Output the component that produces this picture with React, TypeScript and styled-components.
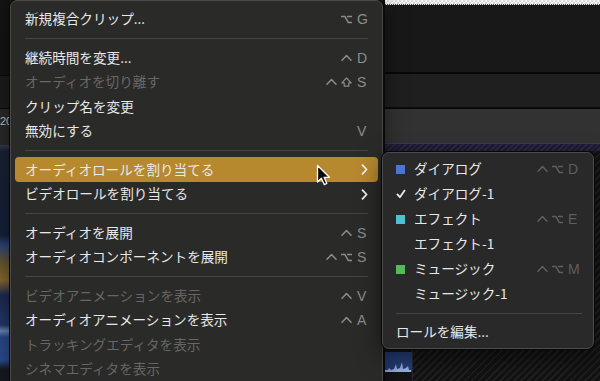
import React from 'react';
import styled, { createGlobalStyle } from 'styled-components';

type Mod = 'ctrl' | 'opt' | 'shift';

type MenuEntry =
  | { kind: 'sep' }
  | {
      kind: 'item';
      label: string;
      mods?: Mod[];
      keyName?: string;
      disabled?: boolean;
      submenu?: boolean;
      active?: boolean;
    };

type RoleEntry =
  | { kind: 'sep' }
  | {
      kind: 'role';
      label: string;
      swatch?: string;
      checked?: boolean;
      mods?: Mod[];
      keyName?: string;
      plain?: boolean;
    };

const mainItems: MenuEntry[] = [
  { kind: 'item', label: '新規複合クリップ...', mods: ['opt'], keyName: 'G' },
  { kind: 'sep' },
  { kind: 'item', label: '継続時間を変更...', mods: ['ctrl'], keyName: 'D' },
  { kind: 'item', label: 'オーディオを切り離す', mods: ['ctrl', 'shift'], keyName: 'S', disabled: true },
  { kind: 'item', label: 'クリップ名を変更' },
  { kind: 'item', label: '無効にする', keyName: 'V' },
  { kind: 'sep' },
  { kind: 'item', label: 'オーディオロールを割り当てる', submenu: true, active: true },
  { kind: 'item', label: 'ビデオロールを割り当てる', submenu: true },
  { kind: 'sep' },
  { kind: 'item', label: 'オーディオを展開', mods: ['ctrl'], keyName: 'S' },
  { kind: 'item', label: 'オーディオコンポーネントを展開', mods: ['ctrl', 'opt'], keyName: 'S' },
  { kind: 'sep' },
  { kind: 'item', label: 'ビデオアニメーションを表示', mods: ['ctrl'], keyName: 'V', disabled: true },
  { kind: 'item', label: 'オーディオアニメーションを表示', mods: ['ctrl'], keyName: 'A' },
  { kind: 'item', label: 'トラッキングエディタを表示', disabled: true },
  { kind: 'item', label: 'シネマエディタを表示', disabled: true }
];

const roleItems: RoleEntry[] = [
  { kind: 'role', label: 'ダイアログ', swatch: '#4d74d2', mods: ['ctrl', 'opt'], keyName: 'D' },
  { kind: 'role', label: 'ダイアログ-1', checked: true },
  { kind: 'role', label: 'エフェクト', swatch: '#4fc0cf', mods: ['ctrl', 'opt'], keyName: 'E' },
  { kind: 'role', label: 'エフェクト-1' },
  { kind: 'role', label: 'ミュージック', swatch: '#55b95c', mods: ['ctrl', 'opt'], keyName: 'M' },
  { kind: 'role', label: 'ミュージック-1' },
  { kind: 'sep' },
  { kind: 'role', label: 'ロールを編集...', plain: true }
];

const GlobalStyle = createGlobalStyle`
  html, body {
    margin: 0;
    padding: 0;
    background: #111;
  }
  body {
    font-family: "Noto Sans CJK JP", "Noto Sans", sans-serif;
  }
`;

const Stage = styled.div`
  position: relative;
  width: 600px;
  height: 381px;
  overflow: hidden;
  background: #161616;
`;

/* ---- the editor behind the menus ---- */

const Backdrop = styled.div`
  display: grid;
  grid-template-columns: 10px 373px 1fr;
  height: 100%;
`;

const LeftStrip = styled.div`
  display: flex;
  flex-direction: column;
  overflow: hidden;
`;

const Band = styled.div<{ $h: number; $bg: string }>`
  flex: 0 0 ${(p) => p.$h}px;
  background: ${(p) => p.$bg};
`;

const StripLabel = styled.div`
  flex: 0 0 36px;
  background: #2a2a2a;
  color: #c8c8c8;
  font-family: "Liberation Sans", sans-serif;
  font-size: 11px;
  line-height: 1;
  padding-top: 7px;
  box-sizing: border-box;
  white-space: nowrap;
  overflow: hidden;
`;

const ThumbStack = styled.div`
  flex: 1;
  background: linear-gradient(
    180deg,
    #3a3f4c 0px,
    #1a2236 6px,
    #15203a 90px,
    #2c4578 100px,
    #705a2c 120px,
    #8a6a30 135px,
    #1c2b52 150px,
    #233a6c 180px,
    #6f86b8 186px,
    #2a4a8c 192px,
    #2d4e92 215px,
    #161a24 224px
  );
`;

const CenterFill = styled.div`
  background: #1a1a1a;
`;

const RightPanels = styled.div`
  display: flex;
  flex-direction: column;
  border-left: 2px solid #0c0c0c;
  overflow: hidden;
`;

const Checker = styled.div`
  flex: 0 0 4px;
  background: repeating-conic-gradient(#d8d8d8 0 25%, #f4f4f4 0 50%) 0 0 / 4px 4px;
  border-bottom: 1px dotted #444;
`;

const RoleLane = styled.div`
  flex: 0 0 7px;
  border-top: 1px solid #3b3763;
  background: repeating-linear-gradient(135deg, #1d1b30 0 2px, #2a2744 2px 4px);
`;

const TimelineRow = styled.div`
  flex: 1;
  display: flex;
`;

const ClipColumn = styled.div`
  flex: 0 0 27px;
  display: flex;
  flex-direction: column;
  justify-content: flex-end;
  padding-bottom: 9px;
  background: #141414;
  border-right: 1px solid #2a2a2a;
`;

const WaveThumb = styled.div`
  height: 20px;
  background: #263f7c;
  display: flex;
  align-items: flex-end;
`;

const HatchFill = styled.div`
  flex: 1;
  background: repeating-linear-gradient(135deg, #121212 0 3px, #1f1f1f 3px 5px);
`;

/* ---- menus ---- */

const MenuPanel = styled.div`
  position: absolute;
  left: 10px;
  top: 0;
  width: 373px;
  height: 400px;
  box-sizing: border-box;
  padding: 5.75px 4px 0;
  background: #2a2a28;
  border: 1px solid #4a4946;
  border-radius: 7px;
  box-shadow: 0 0 0 1px #080808, 0 8px 24px rgba(0, 0, 0, 0.5);
  display: flex;
  flex-direction: column;
`;

const MenuRow = styled.div<{ $active?: boolean; $disabled?: boolean }>`
  flex: 0 0 24.5px;
  display: flex;
  align-items: center;
  padding: 0 9px 0 10px;
  border-radius: 4px;
  background: ${(p) => (p.$active ? '#b7892f' : 'transparent')};
  color: ${(p) => (p.$disabled ? '#686765' : '#e8e8e8')};
  font-size: 13.6px;
  line-height: 1;
  white-space: nowrap;
`;

const RowLabel = styled.span`
  flex: 1;
`;

const Shortcut = styled.span<{ $dim?: boolean }>`
  display: flex;
  align-items: center;
  gap: 5px;
  color: ${(p) => (p.$dim ? '#5f5f5d' : '#8c8c8a')};
`;

const Mods = styled.span`
  display: flex;
  align-items: center;
  gap: 4px;
`;

const ModIcon = styled.svg`
  width: 11px;
  height: 10px;
  display: block;
`;

const KeyCap = styled.span`
  width: 12px;
  font-family: "Liberation Sans", "DejaVu Sans", sans-serif;
  font-size: 14px;
`;

const Separator = styled.div<{ $inset: number; $insetRight: number; $h: number }>`
  flex: 0 0 ${(p) => p.$h}px;
  display: flex;
  align-items: center;
  padding: 0 ${(p) => p.$insetRight}px 0 ${(p) => p.$inset}px;

  &::after {
    content: '';
    flex: 1;
    height: 1px;
    background: #464543;
  }
`;

const ChevronIcon = styled.svg`
  width: 7px;
  height: 11px;
  margin-right: 1px;
`;

const SubMenu = styled.div`
  position: absolute;
  left: 382px;
  top: 152px;
  width: 212px;
  box-sizing: border-box;
  padding: 3.5px 4px;
  background: #292929;
  border: 1px solid #4c4c4c;
  border-radius: 7px;
  box-shadow: 0 0 0 1px #060606, 0 8px 24px rgba(0, 0, 0, 0.55);
  display: flex;
  flex-direction: column;
`;

const SubRow = styled.div`
  flex: 0 0 25px;
  display: flex;
  align-items: center;
  padding: 0 9px;
  color: #e8e8e8;
  font-size: 13.6px;
  line-height: 1;
  white-space: nowrap;
`;

const Indicator = styled.span`
  flex: 0 0 18px;
  display: flex;
  align-items: center;
`;

const Swatch = styled.span<{ $color: string }>`
  width: 9px;
  height: 9px;
  background: ${(p) => p.$color};
`;

const Pointer = styled.svg`
  position: absolute;
  left: 316px;
  top: 164px;
  width: 16px;
  height: 23px;
`;

const modPaths: Record<Mod, string> = {
  ctrl: 'M1 7.2 L5.5 2.6 L10 7.2',
  opt: 'M0.6 2.4 H3.8 L7.4 8.6 H10.6 M6.6 2.4 H10.6',
  shift: 'M5.5 1 L10.2 5.8 H7.8 V9.2 H3.2 V5.8 H0.8 Z'
};

function ModGlyph ({ mod }: { mod: Mod }) {
  return (
    <ModIcon viewBox='0 0 11 10'>
      <path
        d={modPaths[mod]}
        fill='none'
        stroke='currentColor'
        strokeLinecap='round'
        strokeLinejoin='round'
        strokeWidth={mod === 'shift' ? 1.2 : 1.5}
      />
    </ModIcon>
  );
}

function KeyCombo ({ dim, keyName, mods }: { dim?: boolean; keyName: string; mods?: Mod[] }) {
  return (
    <Shortcut $dim={dim}>
      {mods && (
        <Mods>
          {mods.map((m) => <ModGlyph key={m} mod={m} />)}
        </Mods>
      )}
      <KeyCap>{keyName}</KeyCap>
    </Shortcut>
  );
}

function Chevron () {
  return (
    <ChevronIcon viewBox='0 0 7 11'>
      <path
        d='M1.5 1.2 L5.6 5.5 L1.5 9.8'
        fill='none'
        stroke='#f2f2f2'
        strokeLinecap='round'
        strokeLinejoin='round'
        strokeWidth='1.8'
      />
    </ChevronIcon>
  );
}

function CheckMark () {
  return (
    <svg height='10' viewBox='0 0 10 10' width='10'>
      <path
        d='M1.4 5.4 L3.9 8.2 L8.6 1.6'
        fill='none'
        stroke='#ececec'
        strokeLinecap='round'
        strokeLinejoin='round'
        strokeWidth='1.8'
      />
    </svg>
  );
}

function MainMenu () {
  return (
    <MenuPanel>
      {mainItems.map((item, i) => {
        if (item.kind === 'sep') {
          return <Separator $h={14} $inset={10} $insetRight={10} key={i} />;
        }

        return (
          <MenuRow $active={item.active} $disabled={item.disabled} key={i}>
            <RowLabel>{item.label}</RowLabel>
            {item.submenu && <Chevron />}
            {item.keyName && <KeyCombo keyName={item.keyName} mods={item.mods} />}
          </MenuRow>
        );
      })}
    </MenuPanel>
  );
}

function RoleMenu () {
  return (
    <SubMenu>
      {roleItems.map((item, i) => {
        if (item.kind === 'sep') {
          return <Separator $h={13} $inset={9} $insetRight={7} key={i} />;
        }

        return (
          <SubRow key={i}>
            {!item.plain && (
              <Indicator>
                {item.swatch && <Swatch $color={item.swatch} />}
                {item.checked && <CheckMark />}
              </Indicator>
            )}
            <RowLabel>{item.label}</RowLabel>
            {item.keyName && <KeyCombo dim keyName={item.keyName} mods={item.mods} />}
          </SubRow>
        );
      })}
    </SubMenu>
  );
}

export default function App () {
  return (
    <>
      <GlobalStyle />
      <Stage>
        <Backdrop>
          <LeftStrip>
            <Band $bg='#141414' $h={75} />
            <Band $bg='#080808' $h={1} />
            <Band $bg='#1d1d1d' $h={32} />
            <Band $bg='#0a0a0a' $h={1} />
            <StripLabel>20</StripLabel>
            <ThumbStack />
          </LeftStrip>
          <CenterFill />
          <RightPanels>
            <Checker />
            <Band $bg='#181818' $h={67} />
            <Band $bg='#080808' $h={2} />
            <Band $bg='#1f1f1f' $h={33} />
            <Band $bg='#0a0a0a' $h={2} />
            <Band $bg='#323232' $h={34} />
            <RoleLane />
            <TimelineRow>
              <ClipColumn>
                <WaveThumb>
                  <svg height='12' viewBox='0 0 26 12' width='26'>
                    <path
                      d='M0 12 V10 L3 10 L4 8 L6 10 L9 9 L11 4 L12 9 L15 8 L17 2 L18 9 L21 8 L23 6 L24 10 L26 10 V12 Z'
                      fill='#9fb6e6'
                    />
                  </svg>
                </WaveThumb>
              </ClipColumn>
              <HatchFill />
            </TimelineRow>
          </RightPanels>
        </Backdrop>
        <MainMenu />
        <RoleMenu />
        <Pointer viewBox='0 0 16 23'>
          <path
            d='M1.5 1.5 V18 L5.4 14.3 L8.2 20.6 L10.8 19.5 L8.1 13.3 H13.4 Z'
            fill='#0a0a0a'
            stroke='#ffffff'
            strokeLinejoin='round'
            strokeWidth='1.3'
          />
        </Pointer>
      </Stage>
    </>
  );
}
